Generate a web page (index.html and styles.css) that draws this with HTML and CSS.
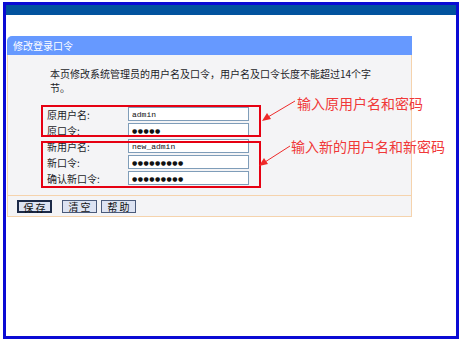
FILE: index.html
```html
<!DOCTYPE html>
<html lang="zh-CN">
<head>
    <meta charset="UTF-8">
    <title>修改登录口令</title>
    <link rel="stylesheet" href="styles.css">
</head>
<body>
    <div class="frame">
        <div class="topbar"></div>
        <div class="panel">
            <div class="panel-head">修改登录口令</div>
            <div class="panel-body">
                <p class="intro">本页修改系统管理员的用户名及口令，用户名及口令长度不能超过14个字节。</p>
                <div class="form">
                    <label>原用户名:</label>
                    <input type="text" value="admin">
                    <label>原口令:</label>
                    <input type="text" class="dots" value="●●●●●">
                    <label>新用户名:</label>
                    <input type="text" value="new_admin">
                    <label>新口令:</label>
                    <input type="text" class="dots" value="●●●●●●●●●">
                    <label>确认新口令:</label>
                    <input type="text" class="dots" value="●●●●●●●●●">
                </div>
            </div>
            <div class="buttons">
                <button class="btn btn-default">保 存</button>
                <button class="btn btn-clear">清 空</button>
                <button class="btn">帮 助</button>
            </div>
        </div>
    </div>

    <!-- annotations drawn over the screenshot -->
    <div class="mark mark-old"></div>
    <div class="mark mark-new"></div>
    <div class="note note-old">输入原用户名和密码</div>
    <div class="note note-new">输入新的用户名和新密码</div>
    <svg class="arrows" width="463" height="343" viewBox="0 0 463 343">
        <line x1="295" y1="101" x2="268" y2="117" stroke="#ee2a2a" stroke-width="1"/>
        <polygon points="262,121 267,113 271,119" fill="#ee2a2a"/>
        <line x1="290" y1="146" x2="265" y2="162" stroke="#ee2a2a" stroke-width="1"/>
        <polygon points="259,166 264,158 268,164" fill="#ee2a2a"/>
    </svg>
</body>
</html>
```

FILE: styles.css
```css
body {
    margin: 0;
    background: #fff;
    font-family: "Noto Sans CJK SC", "Liberation Sans", sans-serif;
    position: relative;
    width: 463px;
    height: 343px;
    overflow: hidden;
}

.frame {
    margin: 2px 0 0 3px;
    width: 450px;
    height: 331px;
    border: 3px solid #0b0bd4;
}

.topbar {
    height: 10px;
    background: #02539e;
}

.panel {
    margin: 21px 0 0 1px;
    width: 405px;
}

.panel-head {
    height: 19px;
    line-height: 19px;
    padding-left: 6px;
    background: #6699ff;
    color: #fff;
    font-size: 10px;
    border-radius: 5px 0 0 0;
}

.panel-body {
    background: #f4f4f6;
    border-left: 1px solid #f5d3ad;
    border-right: 1px solid #f5d3ad;
    padding: 12px 0 9px 0;
}

.intro {
    margin: 0 0 11px 42px;
    width: 325px;
    font-size: 10px;
    line-height: 14px;
    color: #1c1c28;
}

.form {
    display: grid;
    grid-template-columns: 81px 121px;
    grid-auto-rows: 16px;
    padding-left: 39px;
    align-items: center;
}

.form label {
    font-size: 10px;
    color: #1c1c28;
}

.form input {
    box-sizing: border-box;
    width: 121px;
    height: 14px;
    margin: 0;
    padding: 0 0 0 3px;
    border: 1px solid #7f9db9;
    background: #fff;
    font-family: "Liberation Mono", monospace;
    font-size: 8px;
    color: #111;
    outline: none;
}

.form input.dots {
    font-family: "DejaVu Sans", sans-serif;
    font-size: 6px;
    letter-spacing: 0.5px;
}

.buttons {
    height: 20px;
    background: #f4f4f6;
    border: 1px solid #f5d3ad;
    border-top-color: #f5d3ad;
    padding-left: 9px;
    display: flex;
    align-items: center;
}

.btn {
    box-sizing: border-box;
    width: 35px;
    height: 13px;
    margin: 0 4px 0 0;
    padding: 0;
    border: 1px solid #4a5a7a;
    background: #dde3f2;
    font-family: "Noto Sans CJK SC", sans-serif;
    font-size: 10px;
    line-height: 11px;
    color: #111;
}

.btn-default {
    border: 2px solid #1c2a48;
}

.btn-clear {
    margin-left: 6px;
}

.mark {
    position: absolute;
    left: 41px;
    width: 216px;
    border: 2px solid #e60012;
}

.mark-old {
    top: 105px;
    height: 28px;
}

.mark-new {
    top: 141px;
    height: 43px;
}

.note {
    position: absolute;
    font-size: 14px;
    line-height: 16px;
    color: #f03838;
    white-space: nowrap;
}

.note-old {
    left: 297px;
    top: 95px;
}

.note-new {
    left: 291px;
    top: 138px;
}

.arrows {
    position: absolute;
    left: 0;
    top: 0;
    pointer-events: none;
}
```
